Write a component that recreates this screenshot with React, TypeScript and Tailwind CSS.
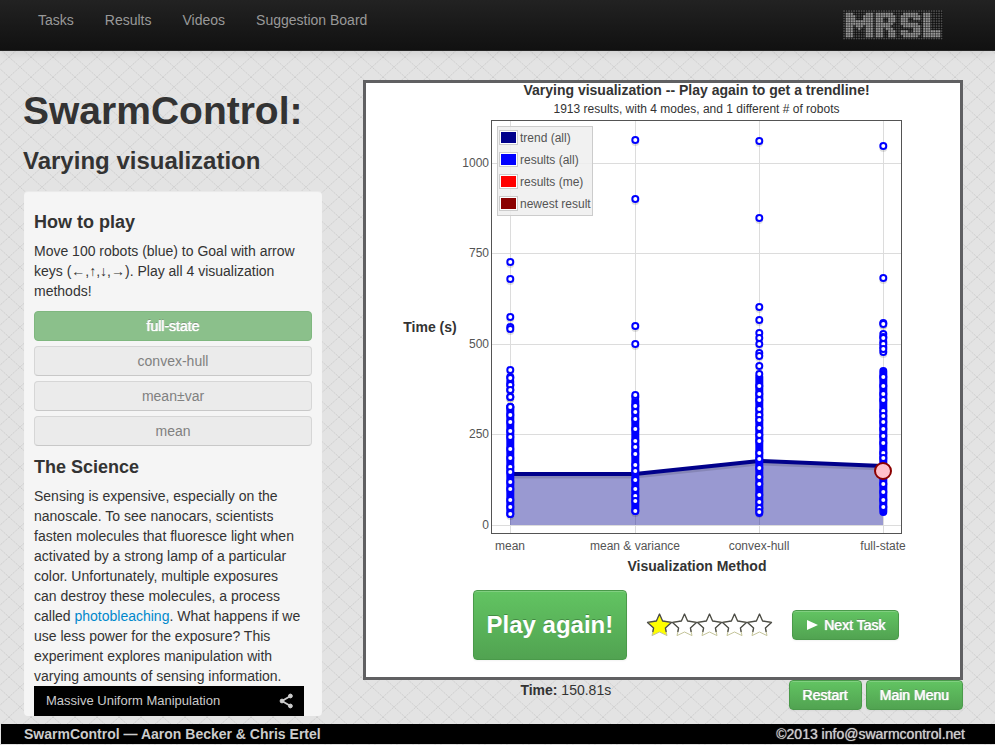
import React from 'react';

const NAV = ['Tasks', 'Results', 'Videos', 'Suggestion Board'];

const GLYPHS = [
  ['###.....###', '####...####', '####...####', '###########', '###########', '###.###.###', '###..#..###', '###.....###', '###.....###', '###.....###'],
  ['#######.', '########', '###..###', '###..###', '#######.', '######..', '###.###.', '###..###', '###..###', '###..###'],
  ['.######.', '########', '###..###', '###.....', '#######.', '.#######', '.....###', '###..###', '########', '.######.'],
  ['###....', '###....', '###....', '###....', '###....', '###....', '###....', '#######', '#######', '#######'],
];
const GLYPH_X = [1, 13, 23, 32];

function lit(col: number, row: number) {
  return GLYPHS.some((g, i) => g[row - 1]?.[col - GLYPH_X[i]] === '#');
}

function Logo() {
  const cells: React.ReactNode[] = [];
  for (let r = 0; r < 12; r++) {
    for (let c = 0; c < 40; c++) {
      const on = lit(c, r);
      const size = on ? 2.1 : 1.7;
      cells.push(<rect key={`${r}-${c}`} x={c * 2.5 + 0.2} y={r * 2.5 + 0.2} width={size} height={size} fill={on ? '#999' : '#505050'} />);
    }
  }
  return (
    <svg width="100" height="30" viewBox="0 0 100 30" role="img" aria-label="MRSL">
      <rect width="100" height="30" fill="#0a0a0a" />
      {cells}
    </svg>
  );
}

function Backdrop() {
  return (
    <svg className="absolute inset-0 -z-10 h-full w-full" aria-hidden="true">
      <defs>
        <pattern id="weave" width="22" height="20" patternUnits="userSpaceOnUse" x="9" y="17">
          <path d="M0 0L22 20M22 0L0 20" stroke="#c8c8c8" strokeWidth="0.8" strokeDasharray="1.6 0.7" fill="none" />
        </pattern>
      </defs>
      <rect width="100%" height="100%" fill="#e3e3e3" />
      <rect width="100%" height="100%" fill="url(#weave)" />
    </svg>
  );
}

/* Chart geometry, in view box units */
const X = [144, 269, 393, 517];
const Y0 = 407;
const PER_SECOND = 0.3625;
const yOf = (s: number) => Y0 - s * PER_SECOND;

type Mode = { label: string; outliers: number[]; dense: [number, number]; top: number[] };
const MODES: Mode[] = [
  {
    label: 'mean',
    outliers: [144, 161, 199, 209, 211, 259, 264, 272, 267, 279, 289],
    dense: [289, 396],
    top: [252, 260, 267, 272, 279, 289, 297, 304, 313, 319, 331, 340, 349, 354, 364, 371, 382, 389, 396],
  },
  {
    label: 'mean & variance',
    outliers: [22, 81, 208, 226, 279],
    dense: [283, 393],
    top: [277, 288, 294, 301, 311, 323, 329, 336, 347, 353, 362, 371, 378, 383, 393],
  },
  {
    label: 'convex-hull',
    outliers: [23, 100, 189, 202, 215, 220, 226, 235],
    dense: [259, 395],
    top: [238, 248, 256, 268, 276, 282, 291, 297, 302, 310, 317, 323, 335, 341, 350, 359, 366, 377, 384, 390, 394],
  },
  {
    label: 'full-state',
    outliers: [28, 160, 205, 216, 219, 224, 229, 234],
    dense: [253, 394],
    top: [206, 220, 226, 231, 259, 268, 276, 282, 293, 298, 304, 311, 318, 325, 335, 340, 366, 374, 382, 389],
  },
];
const TREND = [356, 356, 343, 348];
const LEGEND = [
  ['trend (all)', '#00008b'],
  ['results (all)', '#0000ff'],
  ['results (me)', '#ff0000'],
  ['newest result', '#8b0000'],
];

function Series({ mode, x }: { mode: Mode; x: number }) {
  const points = [...mode.outliers, ...mode.top];
  return (
    <g>
      {points.map((y, i) => (
        <path key={`s${i}`} d={`M${x - 3} ${y + 2}a3 3 0 0 0 6 0`} fill="none" stroke="#000" strokeOpacity={0.12} strokeWidth={2} />
      ))}
      <path d={`M${x} ${mode.dense[0]}V${mode.dense[1]}`} stroke="#0000ff" strokeWidth={8} strokeLinecap="round" />
      {points.map((y, i) => (
        <circle key={i} cx={x} cy={y} r={3} fill="#fff" stroke="#0000ff" strokeWidth={2} />
      ))}
    </g>
  );
}

function Chart() {
  return (
    <svg viewBox="0 0 594 460" className="block w-full font-['Liberation_Sans',Arial,sans-serif]" role="img" aria-label="Completion time by visualization method">
      <g stroke="#dcdcdc" strokeWidth="1">
        {X.map((x) => (
          <path key={x} d={`M${x + 0.5} 3V415`} />
        ))}
        {[0, 250, 500, 750, 1000].map((s) => (
          <path key={s} d={`M126 ${Math.round(yOf(s)) + 0.5}H535`} />
        ))}
      </g>
      <path d={`M${X[0]} ${Y0}${X.map((x, i) => `L${x} ${TREND[i]}`).join('')}L${X[3]} ${Y0}Z`} fill="#00008b" fillOpacity="0.4" />
      <path d={`M${X.map((x, i) => `${x} ${TREND[i] + 3}`).join('L')}`} fill="none" stroke="#000" strokeOpacity="0.12" strokeWidth="3" />
      <path d={`M${X.map((x, i) => `${x} ${TREND[i]}`).join('L')}`} fill="none" stroke="#00008b" strokeWidth="4" />
      {MODES.map((m, i) => (
        <Series key={m.label} mode={m} x={X[i] + 0.3} />
      ))}
      <circle cx="517" cy="353" r="8" fill="#ffc0cb" stroke="#8b0000" strokeWidth="2" />
      <rect x="125.5" y="2.5" width="410" height="413" fill="none" stroke="#545454" />
      <g fontSize="12" fill="#545454" textAnchor="end">
        {[0, 250, 500, 750, 1000].map((s) => (
          <text key={s} x="123" y={Math.round(yOf(s)) + 4}>{s}</text>
        ))}
      </g>
      <g fontSize="12" fill="#545454" textAnchor="middle">
        {MODES.map((m, i) => (
          <text key={m.label} x={X[i]} y="432">{m.label}</text>
        ))}
      </g>
      <g fontSize="14" fontWeight="bold" fill="#333" textAnchor="middle">
        <text x="64" y="214">Time (s)</text>
        <text x="331" y="453">Visualization Method</text>
      </g>
      <rect x="131.5" y="8.5" width="95" height="89" fill="#eee" fillOpacity="0.85" stroke="#ccc" />
      {LEGEND.map(([label, color], i) => (
        <g key={label}>
          <rect x="133.5" y={12.5 + i * 22} width="18" height="14" fill="#fff" stroke="#ccc" />
          <rect x="135" y={14 + i * 22} width="15" height="11" fill={color} />
          <text x="154" y={24 + i * 22} fontSize="12" fill="#545454">{label}</text>
        </g>
      ))}
    </svg>
  );
}

function Star({ n, on }: { n: number; on: boolean }) {
  return (
    <button type="button" aria-label={`Rate ${n} of 5`} className="block h-6 w-[25px]">
      <svg width="25" height="24" viewBox="0 0 25 24" className="overflow-visible">
        <path d="M12.5 1L15.6 8L24.5 9.4L18.4 15L20 22.6L12.5 19L5 22.6L6.6 15L0.5 9.4L9.4 8Z" fill={on ? '#ffff00' : '#fff'} stroke="#c4c49a" strokeWidth="1" strokeLinejoin="round" />
        <path d="M5.8 19L6.6 15L0.5 9.4L9.4 8L12.5 1L15.6 8L24.5 9.4L18.4 15L19.2 19" fill="none" stroke="#4c4c48" strokeWidth="1.3" strokeLinejoin="round" />
      </svg>
    </button>
  );
}

const GREEN =
  'rounded border border-[#4a9a4a] bg-linear-to-b from-[#62c462] to-[#51a351] text-white shadow-[inset_0_1px_0_rgba(255,255,255,0.2),0_1px_2px_rgba(0,0,0,0.05)]';
const GLOW = '[text-shadow:0_-1px_0_rgba(0,0,0,0.25),0_0_1px_#fff,0_0_1px_#fff]';

function GreenButton({ children }: { children: React.ReactNode }) {
  return (
    <button type="button" className={`${GREEN} ${GLOW} h-[30px] px-[13px] whitespace-nowrap`}>
      {children}
    </button>
  );
}

export default function App() {
  return (
    <div className="relative isolate min-h-screen font-['Liberation_Sans',Arial,sans-serif] text-sm leading-5 text-[#333]">
      <Backdrop />
      <header className="flex h-[51px] items-start justify-between border-b border-[#252525] bg-linear-to-b from-[#222] to-[#111] pr-[52px] pl-[23px] shadow-[0_1px_10px_rgba(0,0,0,0.1)]">
        <nav className="flex gap-px">
          {NAV.map((item) => (
            <a key={item} href="#" className="px-[15px] py-[10px] text-[#999]">
              {item}
            </a>
          ))}
        </nav>
        <a href="#" className="mt-[10px] block">
          <Logo />
        </a>
      </header>

      <main className="flex items-start pr-8 pl-6">
        <aside className="w-[298px] shrink-0 pt-10">
          <h1 className="-ml-px text-[39px] leading-10 font-bold">SwarmControl:</h1>
          <h2 className="mt-[10px] -ml-px text-2xl leading-10 font-bold">Varying visualization</h2>
          <section className="mt-[10px] rounded bg-[#f5f5f5] px-[10px] pt-[21px] shadow-[inset_0_1px_1px_rgba(0,0,0,0.05)]">
            <h3 className="text-lg leading-5 font-bold">How to play</h3>
            <p className="mt-[9px]">Move 100 robots (blue) to Goal with arrow keys (←,↑,↓,→). Play all 4 visualization methods!</p>
            <div className="mt-[10px] flex flex-col gap-[5px]">
              <button type="button" className={`h-[30px] rounded border border-[#7fb77f] bg-[#8bc08b] text-white ${GLOW}`}>
                full-state
              </button>
              {['convex-hull', 'mean±var', 'mean'].map((m) => (
                <button key={m} type="button" className="h-[30px] rounded border border-[#d6d6d6] border-b-[#c8c8c8] bg-[#ebebeb] text-[#808080]">
                  {m}
                </button>
              ))}
            </div>
            <h3 className="mt-[11px] text-lg leading-5 font-bold">The Science</h3>
            <p className="mt-[9px] -mr-2">
              Sensing is expensive, especially on the
              <br />
              nanoscale. To see nanocars, scientists
              <br />
              fasten molecules that fluoresce light when
              <br />
              activated by a strong lamp of a particular
              <br />
              color. Unfortunately, multiple exposures
              <br />
              can destroy these molecules, a process
              <br />
              called <a href="#" className="text-[#0088cc]">photobleaching</a>. What happens if we
              <br />
              use less power for the exposure? This
              <br />
              experiment explores manipulation with
              <br />
              varying amounts of sensing information.
            </p>
            <div className="mr-2 flex h-[30px] items-center justify-between bg-black px-3 text-[13px] text-[#ccc]">
              <span>Massive Uniform Manipulation</span>
              <button type="button" aria-label="Share" className="-mr-px">
                <svg width="14" height="16" viewBox="0 0 14 16" fill="#ccc" stroke="#ccc">
                  <path d="M11.5 3L3 8L11.5 13" fill="none" strokeWidth="1.8" />
                  <circle cx="11.4" cy="3" r="1.9" />
                  <circle cx="3" cy="8" r="1.9" />
                  <circle cx="11.4" cy="13" r="1.9" />
                </svg>
              </button>
            </div>
          </section>
        </aside>

        <div className="ml-[41px] min-w-0 flex-1 pt-[29px]">
          <section className="border-[3px] border-[#606062] bg-white pb-[17px]">
            <div className="pl-[67px] text-center">
              <h2 className="text-sm leading-[15px] font-bold">Varying visualization -- Play again to get a trendline!</h2>
              <p className="pt-[2px] text-xs leading-[18px]">1913 results, with 4 modes, and 1 different # of robots</p>
            </div>
            <Chart />
            <div className="mt-3 flex items-center justify-center gap-5 pl-[46px]">
              <button type="button" className={`${GREEN} h-[70px] px-[13px] text-2xl font-bold whitespace-nowrap [text-shadow:0_-1px_0_rgba(0,0,0,0.25)]`}>
                Play again!
              </button>
              <div className="flex">
                {[1, 2, 3, 4, 5].map((n) => (
                  <Star key={n} n={n} on={n === 1} />
                ))}
              </div>
              <GreenButton>
                <span className="flex items-center gap-[6px]">
                  <svg width="12" height="12" viewBox="0 0 12 12" fill="#fff">
                    <path d="M1 1L12 6L1 11Z" />
                  </svg>
                  Next Task
                </span>
              </GreenButton>
            </div>
          </section>
          <div className="flex items-start gap-1">
            <p className="flex-1 pr-4 text-center">
              <strong>Time:</strong> 150.81s
            </p>
            <GreenButton>Restart</GreenButton>
            <GreenButton>Main Menu</GreenButton>
          </div>
        </div>
      </main>

      <footer className="mt-2 ml-px flex justify-between bg-black pr-[30px] pl-[23px] text-[#ccc]">
        <span className="font-bold">SwarmControl — Aaron Becker &amp; Chris Ertel</span>
        <a href="#" className="[text-shadow:0_0_1px_#ccc]">©2013 info@swarmcontrol.net</a>
      </footer>
    </div>
  );
}
